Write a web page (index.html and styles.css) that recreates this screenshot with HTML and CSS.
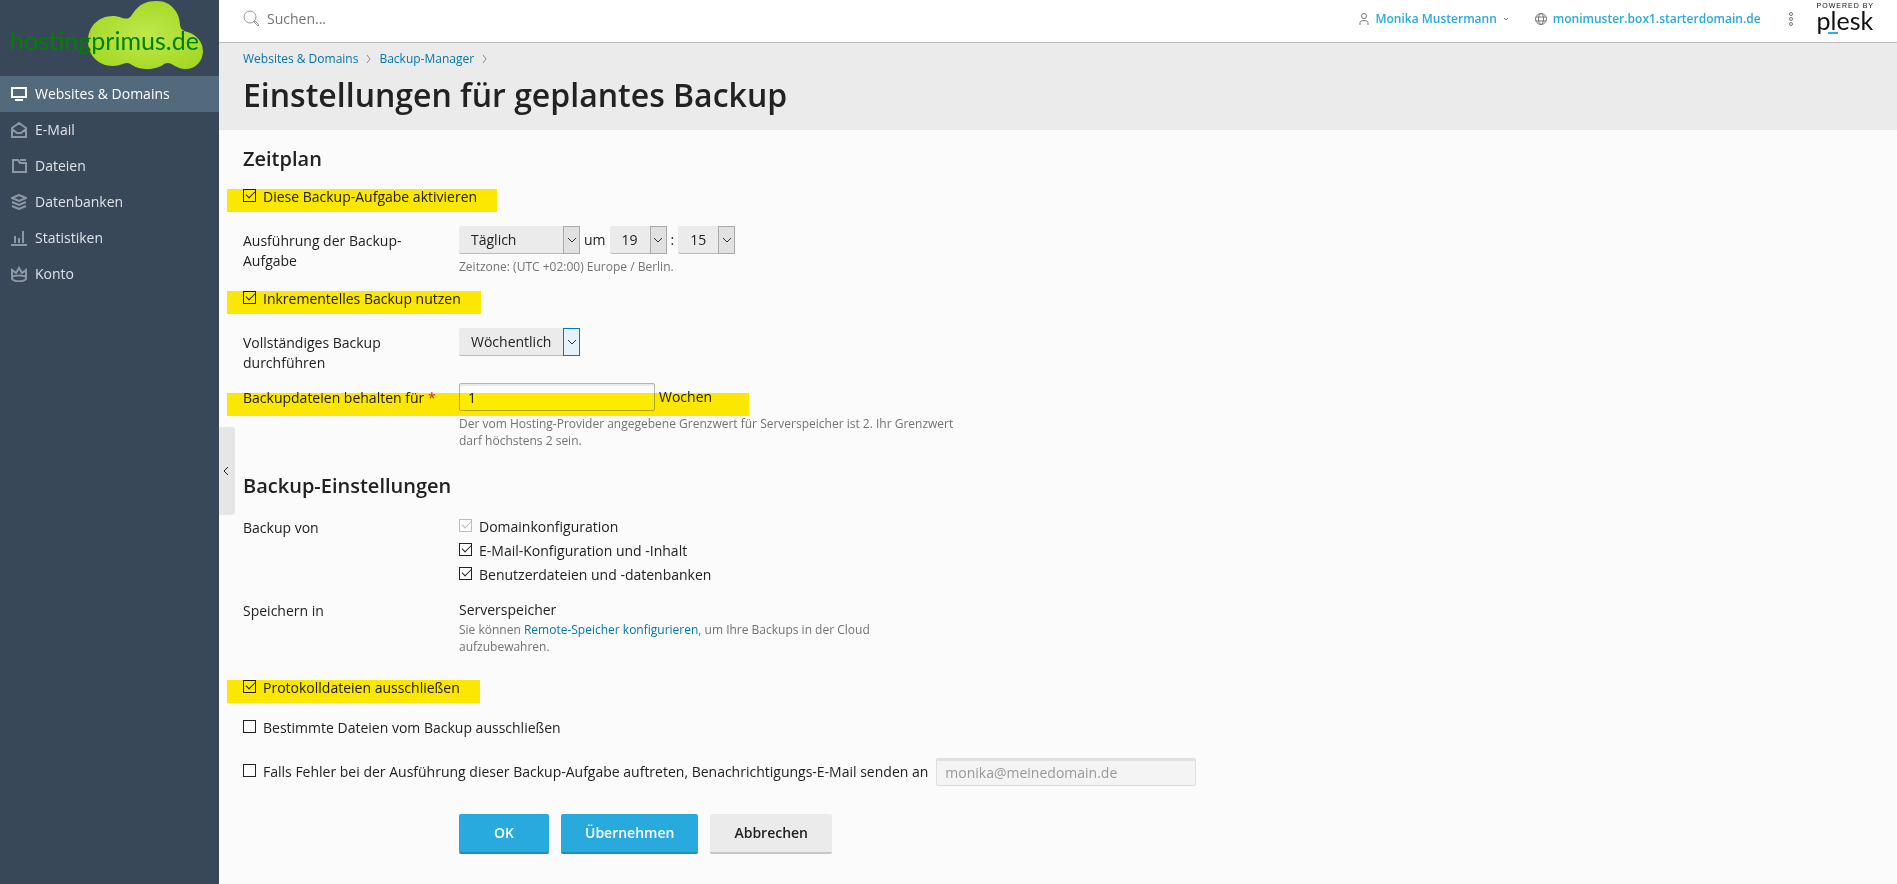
FILE: index.html
```
<!DOCTYPE html>
<html lang="de">
<head>
    <meta charset="UTF-8">
    <meta name="viewport" content="width=device-width, initial-scale=1.0">
    <title>Einstellungen für geplantes Backup</title>
    <link rel="stylesheet" href="styles.css">
</head>
<body>
    <div class="page">
        <!-- Seitenleiste -->
        <aside class="sidebar">
            <a class="brand" href="#">
                <svg class="brand-cloud" viewBox="0 0 116 70" width="116" height="70" aria-hidden="true">
                    <defs>
                        <radialGradient id="cloud" cx="50%" cy="50%" r="60%">
                            <stop offset="0" stop-color="#bfe84a"/>
                            <stop offset="1" stop-color="#a3d824"/>
                        </radialGradient>
                    </defs>
                    <path fill="url(#cloud)" d="M25 15C32 15 36 19 41 17C46 14 48 0 69 0C84 0 92 13 92 24C93 32 99 29 106 34C122 45 115 68 97 68C86 68 84 59 76 63C69 69 52 70 44 64C37 59 35 65 25 65C10 65 0 54 0 40C0 26 10 15 25 15Z"/>
                </svg>
                <span class="brand-name">hostingprimus.de</span>
            </a>
            <nav class="menu">
                <a class="menu-item active" href="#">
                    <svg viewBox="0 0 16 16"><path d="M1 2h14v9H1zM4 14h8"/></svg>
                    Websites &amp; Domains
                </a>
                <a class="menu-item" href="#">
                    <svg viewBox="0 0 16 16"><path d="M1 6l7-5 7 5v9H1zM1 7l5 4h4l5-4"/></svg>
                    E-Mail
                </a>
                <a class="menu-item" href="#">
                    <svg viewBox="0 0 16 16"><path d="M2 2h5l2 3h6v9H2zM9 2h6"/></svg>
                    Dateien
                </a>
                <a class="menu-item" href="#">
                    <svg viewBox="0 0 16 16"><path d="M1 4l7-3 7 3-7 3zM1 8l7 3 7-3M1 12l7 3 7-3"/></svg>
                    Datenbanken
                </a>
                <a class="menu-item" href="#">
                    <svg viewBox="0 0 16 16"><path d="M0 15h16M4 6v7M8 8v5M12 1v12"/></svg>
                    Statistiken
                </a>
                <a class="menu-item" href="#">
                    <svg viewBox="0 0 16 16"><path d="M1 13V4l4 3 3-5 3 5 4-3v9M1 11c2-2 12-2 14 0v2c-2 3-12 3-14 0z"/></svg>
                    Konto
                </a>
            </nav>
        </aside>

        <div class="main">
            <button class="collapse" type="button" aria-label="Seitenleiste einklappen">
                <svg viewBox="0 0 6 10" width="6" height="10"><path d="M5 1L1 5l4 4"/></svg>
            </button>

            <header class="topbar">
                <div class="search">
                    <svg viewBox="0 0 18 18" width="18" height="18"><circle cx="7" cy="7" r="6"/><path d="M11 12l1-1 4 4-1 1z"/></svg>
                    <input type="text" placeholder="Suchen..." aria-label="Suchen">
                </div>
                <a class="top-link user" href="#">
                    <svg viewBox="0 0 10 12" width="10" height="12"><circle cx="5" cy="3" r="2.500"/><path d="M1 12V9.500C1 7 9 7 9 9.500V12"/></svg>
                    Monika Mustermann
                    <svg class="caret" viewBox="0 0 6 4" width="6" height="4"><path d="M1 1l2 2 2-2"/></svg>
                </a>
                <a class="top-link domain" href="#">
                    <svg viewBox="0 0 12 12" width="12" height="12"><circle cx="6" cy="6" r="5.500"/><ellipse cx="6" cy="6" rx="2.500" ry="5.500"/><path d="M1 4h10M1 8h10"/></svg>
                    monimuster.box1.starterdomain.de
                </a>
                <button class="more" type="button" aria-label="Mehr">
                    <svg viewBox="0 0 4 14" width="4" height="14"><circle cx="2" cy="2" r="1.500"/><circle cx="2" cy="7" r="1.500"/><circle cx="2" cy="12" r="1.500"/></svg>
                </button>
                <a class="plesk" href="#">
                    <span class="plesk-by">POWERED BY</span>
                    <span class="plesk-name">plesk</span>
                </a>
            </header>

            <div class="page-head">
                <nav class="crumbs">
                    <a href="#">Websites &amp; Domains</a>
                    <svg viewBox="0 0 5 8" width="5" height="8"><path d="M1 0l3 4-3 4"/></svg>
                    <a href="#">Backup-Manager</a>
                    <svg viewBox="0 0 5 8" width="5" height="8"><path d="M1 0l3 4-3 4"/></svg>
                </nav>
                <h1>Einstellungen für geplantes Backup</h1>
            </div>

            <form class="content">
                <!-- Zeitplan -->
                <h2>Zeitplan</h2>
                <div class="check-row">
                    <label class="check marked"><input type="checkbox" checked>Diese Backup-Aufgabe aktivieren</label>
                </div>

                <div class="row schedule">
                    <label class="row-label" for="period">Ausführung der Backup-Aufgabe</label>
                    <div class="field">
                        <div class="controls">
                            <span class="select wide">
                                <select id="period"><option>Täglich</option><option>Wöchentlich</option><option>Monatlich</option></select>
                                <span class="arrow"><svg viewBox="0 0 10 6" width="10" height="6"><path d="M1 1l4 4 4-4"/></svg></span>
                            </span>
                            um
                            <span class="select">
                                <select aria-label="Stunde"><option>19</option></select>
                                <span class="arrow"><svg viewBox="0 0 10 6" width="10" height="6"><path d="M1 1l4 4 4-4"/></svg></span>
                            </span>
                            :
                            <span class="select">
                                <select aria-label="Minute"><option>15</option></select>
                                <span class="arrow"><svg viewBox="0 0 10 6" width="10" height="6"><path d="M1 1l4 4 4-4"/></svg></span>
                            </span>
                        </div>
                        <p class="hint">Zeitzone: (UTC +02:00) Europe / Berlin.</p>
                    </div>
                </div>

                <div class="check-row">
                    <label class="check marked"><input type="checkbox" checked>Inkrementelles Backup nutzen</label>
                </div>

                <div class="row">
                    <label class="row-label" for="full">Vollständiges Backup durchführen</label>
                    <div class="field">
                        <div class="controls">
                            <span class="select wide hover">
                                <select id="full"><option>Wöchentlich</option><option>Monatlich</option></select>
                                <span class="arrow"><svg viewBox="0 0 10 6" width="10" height="6"><path d="M1 1l4 4 4-4"/></svg></span>
                            </span>
                        </div>
                    </div>
                </div>

                <div class="row keep">
                    <label class="row-label" for="rotation">Backupdateien behalten für <span class="required">*</span></label>
                    <div class="field">
                        <div class="controls">
                            <input class="text" type="text" id="rotation" value="1">
                            Wochen
                        </div>
                        <p class="hint">Der vom Hosting-Provider angegebene Grenzwert für Serverspeicher ist 2. Ihr Grenzwert darf höchstens 2 sein.</p>
                    </div>
                </div>

                <!-- Backup-Einstellungen -->
                <h2>Backup-Einstellungen</h2>
                <div class="row">
                    <span class="row-label">Backup von</span>
                    <div class="field checks">
                        <label class="check"><input type="checkbox" checked disabled>Domainkonfiguration</label>
                        <label class="check"><input type="checkbox" checked>E-Mail-Konfiguration und -Inhalt</label>
                        <label class="check"><input type="checkbox" checked>Benutzerdateien und -datenbanken</label>
                    </div>
                </div>

                <div class="row storage">
                    <span class="row-label">Speichern in</span>
                    <div class="field">
                        <div>Serverspeicher</div>
                        <p class="hint">Sie können <a href="#">Remote-Speicher konfigurieren</a>, um Ihre Backups in der Cloud aufzubewahren.</p>
                    </div>
                </div>

                <div class="options">
                    <div><label class="check marked"><input type="checkbox" checked>Protokolldateien ausschließen</label></div>
                    <div><label class="check"><input type="checkbox">Bestimmte Dateien vom Backup ausschließen</label></div>
                    <div class="notify">
                        <label class="check"><input type="checkbox">Falls Fehler bei der Ausführung dieser Backup-Aufgabe auftreten, Benachrichtigungs-E-Mail senden an</label>
                        <input class="text email" type="text" value="monika@meinedomain.de" aria-label="E-Mail-Adresse" disabled>
                    </div>
                </div>

                <div class="buttons">
                    <button class="btn primary" type="button">OK</button>
                    <button class="btn primary" type="button">Übernehmen</button>
                    <button class="btn" type="button">Abbrechen</button>
                </div>
            </form>
        </div>
    </div>
</body>
</html>
```

FILE: styles.css
```
* {
    box-sizing: border-box;
}
body {
    margin: 0;
    font-family: "Open Sans", sans-serif;
    font-size: 14px;
    line-height: 20px;
    color: #222;
    background: #fbfbfb;
}
a {
    color: #0077b0;
    text-decoration: none;
}
svg {
    flex: none;
    fill: none;
    stroke: currentColor;
}
input, select, button {
    font: inherit;
    color: inherit;
    margin: 0;
}
.page {
    display: flex;
    min-height: 100vh;
}

/* Seitenleiste */
.sidebar {
    flex: none;
    width: 219px;
    background: #394858;
}
.brand {
    display: block;
    position: relative;
    height: 76px;
    padding: 20px 0 0 10px;
}
.brand-cloud {
    position: absolute;
    left: 88px;
    top: 1px;
    stroke: none;
}
.brand-name {
    position: relative;
    font-family: "Lato", sans-serif;
    font-size: 25px;
    line-height: 40px;
    color: #008000;
}
.menu-item {
    display: flex;
    align-items: center;
    gap: 8px;
    height: 36px;
    padding-left: 11px;
    color: #dee2e6;
}
.menu-item svg {
    width: 16px;
    height: 16px;
    stroke: #8e98a3;
    stroke-width: 2px;
}
.menu-item.active {
    background: #53697c;
    color: #fff;
}
.menu-item.active svg {
    stroke: #fff;
}

/* Kopfzeile */
.main {
    position: relative;
    flex: 1;
    min-width: 0;
}
.topbar {
    display: flex;
    align-items: center;
    height: 43px;
    padding: 0 23px 4px 24px;
    background: #fff;
    border-bottom: 1px solid #bbb;
}
.search {
    display: flex;
    flex: 1;
    align-items: center;
    gap: 6px;
    color: #999;
}
.search input {
    border: 0;
    padding: 0;
    outline: 0;
    background: none;
}
.search input::placeholder {
    color: #737373;
}
.top-link {
    display: flex;
    align-items: center;
    gap: 6px;
    font-size: 12px;
    font-weight: 600;
    color: #28aade;
}
.top-link svg {
    color: #777;
}
.top-link.domain {
    margin: 0 28px 0 26px;
}
.more {
    display: flex;
    padding: 0;
    border: 0;
    background: none;
    color: #777;
}
.plesk {
    display: flex;
    flex-direction: column;
    align-self: flex-start;
    margin-left: 24px;
    padding-top: 2px;
    color: #111;
}
.plesk-by {
    font-family: "Liberation Sans", sans-serif;
    font-size: 7px;
    line-height: 7px;
    letter-spacing: 1px;
}
.plesk-name {
    position: relative;
    font-family: "Lato", sans-serif;
    font-size: 25px;
    line-height: 22px;
}
.plesk-name::after {
    content: "";
    position: absolute;
    left: 11px;
    bottom: -3px;
    width: 10px;
    height: 2px;
    background: #28b4e6;
}
.page-head {
    padding: 6px 24px 13px;
    background: #ebebeb;
}
.crumbs {
    display: flex;
    align-items: center;
    gap: 8px;
    font-size: 12px;
    color: #888;
}
h1 {
    margin: 4px 0 0;
    font-size: 32px;
    line-height: 44px;
    font-weight: 600;
}
.collapse {
    position: absolute;
    left: 0;
    top: 427px;
    width: 16px;
    height: 88px;
    padding: 0 0 0 4px;
    border: 0;
    border-radius: 0 3px 3px 0;
    background: #e6e6e6;
    text-align: left;
}

/* Formular */
.content {
    padding: 15px 24px 30px;
}
h2 {
    margin: 0;
    font-size: 20px;
    line-height: 28px;
    font-weight: 600;
}
.check-row {
    margin: 14px 0 19px;
}
.check {
    position: relative;
    display: inline-flex;
    gap: 7px;
}
.check input {
    appearance: none;
    flex: none;
    position: relative;
    width: 13px;
    height: 13px;
    margin-top: 2px;
    border: 1px solid #222;
    background: #fff;
}
.check input:checked::after {
    content: "";
    position: absolute;
    left: 2px;
    top: 1px;
    width: 8px;
    height: 4px;
    border: solid #222;
    border-width: 0 0 1px 1px;
    transform: rotate(-45deg);
}
.check input:disabled {
    border-color: #bbb;
}
.check input:disabled::after {
    border-color: #bbb;
}
/* Textmarker */
.marked::after, .keep::after {
    content: "";
    position: absolute;
    left: -16px;
    right: -20px;
    top: 2px;
    height: 23px;
    background: #ffeb00;
    mix-blend-mode: multiply;
    pointer-events: none;
}
.row {
    display: flex;
}
.row-label {
    flex: none;
    width: 216px;
    padding: 5px 30px 0 0;
}
.controls {
    display: flex;
    align-items: center;
    gap: 4px;
}
.field {
    max-width: 500px;
}
.select {
    position: relative;
    display: inline-block;
    width: 57px;
}
.select.wide {
    width: 121px;
}
.select select {
    display: block;
    appearance: none;
    width: 100%;
    height: 28px;
    padding: 0 0 0 12px;
    border: 0;
    border-bottom: 1px solid #bbb;
    border-radius: 2px;
    background: #ebebeb;
}
.arrow {
    position: absolute;
    top: 0;
    right: 0;
    display: flex;
    align-items: center;
    justify-content: center;
    width: 17px;
    height: 28px;
    border: 1px solid #aaa;
    background: #e1e1e1;
    color: #333;
    pointer-events: none;
}
.hover .arrow {
    border-color: #0078d7;
    background: #e5f1fb;
}
.hint {
    margin: 4px 0 0;
    font-size: 12px;
    line-height: 17px;
    color: #737373;
}
.text {
    width: 196px;
    height: 28px;
    padding: 0 8px;
    border: 1px solid #b4b4b4;
    border-radius: 2px;
    background: #fff;
    box-shadow: inset 0 2px 0 #ebebeb;
}
.text:disabled {
    border-color: #ddd;
    background: #f4f4f4;
    box-shadow: inset 0 2px 0 #e1e1e1;
    color: #999;
}
.keep {
    position: relative;
    margin: 10px 0 23px;
}
.keep .row-label {
    padding-right: 0;
}
.keep::after {
    top: 10px;
    right: auto;
    width: 522px;
}
.required {
    color: #d02f2f;
}
.checks {
    display: flex;
    flex-direction: column;
    gap: 4px;
}
h2 + .row {
    margin-top: 17px;
}
h2 + .row .row-label, .storage .row-label {
    padding-top: 1px;
}
.storage {
    margin-top: 15px;
}
.storage .hint {
    margin-top: 1px;
}
.options {
    display: flex;
    flex-direction: column;
    gap: 20px;
    margin-top: 23px;
}
.notify {
    display: flex;
    align-items: center;
    gap: 8px;
}
.email {
    width: 260px;
}
.buttons {
    display: flex;
    gap: 12px;
    margin: 28px 0 0 216px;
}
.btn {
    min-width: 90px;
    height: 40px;
    padding: 0 24px;
    border: 0;
    border-bottom: 2px solid #c6c6c6;
    border-radius: 2px;
    background: #ebebeb;
    font-weight: 600;
}
.btn.primary {
    border-color: #1d8fbf;
    background: #28aade;
    color: #fff;
}
```
